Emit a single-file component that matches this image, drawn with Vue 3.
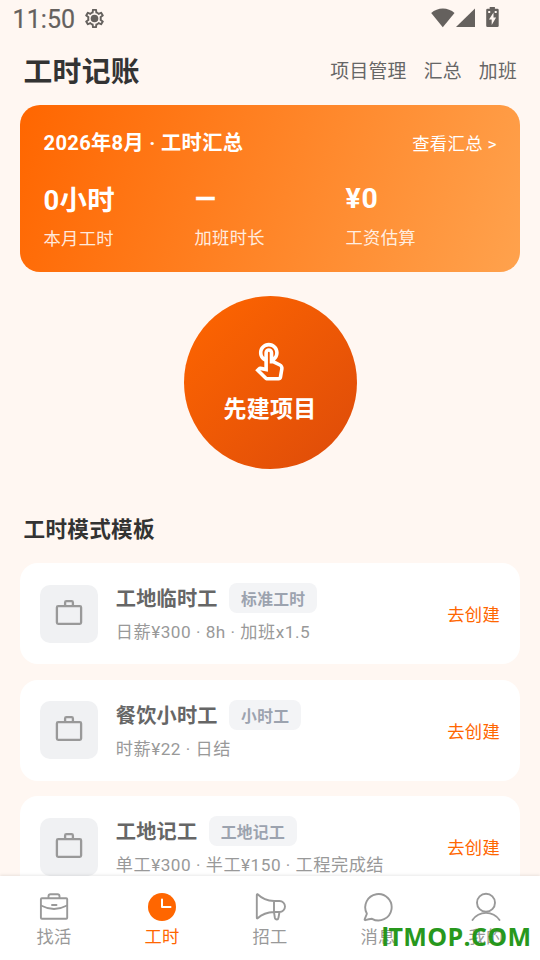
<script setup>
const stats = [
  { value: '0小时', label: '本月工时', mixed: true },
  { value: '—', label: '加班时长', dash: true },
  { value: '¥0', label: '工资估算' }
]
const templates = [
  { name: '工地临时工', tag: '标准工时', desc: '日薪¥300 · 8h · 加班x1.5' },
  { name: '餐饮小时工', tag: '小时工', desc: '时薪¥22 · 日结' },
  { name: '工地记工', tag: '工地记工', desc: '单工¥300 · 半工¥150 · 工程完成结' }
]
const tabs = [
  { id: 'jobs', label: '找活' },
  { id: 'hours', label: '工时', active: true },
  { id: 'hire', label: '招工' },
  { id: 'chat', label: '消息' },
  { id: 'me', label: '我的' }
]
</script>

<template>
  <div class="screen">
    <div class="status">
      <span class="clock">11:50</span>
      <svg class="gear" viewBox="0 0 24 24"><path d="M19.43 12.98c.04-.32.07-.64.07-.98s-.03-.66-.07-.98l2.11-1.65c.19-.15.24-.42.12-.64l-2-3.46a.5.5 0 0 0-.61-.22l-2.49 1c-.52-.4-1.08-.73-1.69-.98l-.38-2.65A.49.49 0 0 0 14 2h-4c-.25 0-.46.18-.49.42l-.38 2.65c-.61.25-1.17.59-1.69.98l-2.49-1a.5.5 0 0 0-.61.22l-2 3.46c-.13.22-.07.49.12.64l2.11 1.65c-.04.32-.07.65-.07.98s.03.66.07.98l-2.11 1.65c-.19.15-.24.42-.12.64l2 3.46c.12.22.39.3.61.22l2.49-1c.52.4 1.08.73 1.69.98l.38 2.65c.03.24.24.42.49.42h4c.25 0 .46-.18.49-.42l.38-2.65c.61-.25 1.17-.59 1.69-.98l2.49 1c.23.09.49 0 .61-.22l2-3.46c.12-.22.07-.49-.12-.64l-2.11-1.65zm-1.98-1.71c.04.31.05.52.05.73s-.02.43-.05.73l-.14 1.13.89.7 1.08.84-.7 1.21-1.27-.51-1.04-.42-.9.68c-.43.32-.84.56-1.25.73l-1.06.43-.16 1.13-.2 1.35h-1.4l-.35-2.48-1.06-.43c-.43-.18-.83-.41-1.23-.71l-.91-.7-1.06.43-1.27.51-.7-1.21 1.08-.84.89-.7-.14-1.13A7 7 0 0 1 6.5 12c0-.2.02-.43.05-.73l.14-1.13-.89-.7-1.08-.84.7-1.21 1.27.51 1.04.42.9-.68c.43-.32.84-.56 1.25-.73l1.06-.43.16-1.13.2-1.35h1.39l.35 2.48 1.06.43c.43.18.83.41 1.23.71l.91.7 1.06-.43 1.27-.51.7 1.21-1.07.85-.89.7.14 1.13z"/><circle cx="12" cy="12" r="4"/></svg>
      <span class="grow"></span>
      <svg class="sys" width="68" height="22" viewBox="0 0 68 22">
        <path d="M0.2 6C6.5 -.1 17.300 -.1 23.500 6L11.800 20.200Z"/>
        <path d="M44 1.500V20H25Z"/>
        <path fill-rule="evenodd" d="M58.700 0h5.200v1.700h2.500a1.300 1.300 0 0 1 1.300 1.300v15.700a1.300 1.300 0 0 1-1.300 1.300H56.500a1.300 1.300 0 0 1-1.300-1.300V3a1.300 1.300 0 0 1 1.300-1.300h2.200zM57.200 4h2v2h-2zM63.700 4h2v2h-2zM62.500 5.500l-4.500 7h2.700v5.500l4.400-7.500h-2.600z"/>
      </svg>
    </div>

    <header class="header">
      <h1>工时记账</h1>
      <nav><span>项目管理</span><span>汇总</span><span>加班</span></nav>
    </header>

    <main class="content">
      <section class="summary">
        <div class="summary-top">
          <b>2026年8月 · 工时汇总</b>
          <span>查看汇总 &gt;</span>
        </div>
        <div class="stats">
          <div v-for="s in stats" :key="s.label" class="stat" :class="{ mixed: s.mixed }">
            <b :class="{ dash: s.dash }">{{ s.value }}</b>
            <span>{{ s.label }}</span>
          </div>
        </div>
      </section>

      <button class="create">
        <svg viewBox="0 0 24 24"><path d="M18.190 12.440l-3.240-1.620c1.290-1 2.120-2.560 2.120-4.320C17.070 3.460 14.600 1 11.570 1S6.070 3.460 6.070 6.500c0 2.130 1.220 3.980 3 4.890v3.260c-2.150-.46-2.020-.44-2.260-.44-.53 0-1.030.21-1.410.59L4 16.220l5.090 5.090c.43.44 1.030.69 1.650.69h6.300c.98 0 1.810-.7 1.970-1.670l.8-4.710c.22-1.300-.43-2.580-1.620-3.180zm-.35 2.850l-.8 4.710h-6.300c-.09 0-.17-.04-.24-.1l-3.680-3.680 4.250.89V6.500c0-.28.22-.5.5-.5s.5.22.5.5v6h1.760l3.460 1.730c.4.2.62.63.55 1.060zM8.070 6.500c0-1.930 1.570-3.500 3.500-3.500s3.500 1.570 3.500 3.500c0 .95-.38 1.810-1 2.440V6.500c0-1.380-1.120-2.500-2.500-2.500s-2.500 1.120-2.500 2.500v2.440c-.62-.63-1-1.490-1-2.440z"/></svg>
        <span>先建项目</span>
      </button>

      <h2>工时模式模板</h2>
      <div class="list">
        <article v-for="t in templates" :key="t.name" class="card">
          <div class="thumb">
            <svg width="28" height="28" viewBox="0 0 28 28"><rect x="1.900" y="6.100" width="24.200" height="17.700" rx="1.300"/><path d="M10.100 6V2.500a1.300 1.300 0 0 1 1.300-1.300h5.200a1.300 1.300 0 0 1 1.300 1.300V6"/></svg>
          </div>
          <div class="info">
            <div class="name"><b>{{ t.name }}</b><span class="tag">{{ t.tag }}</span></div>
            <p>{{ t.desc }}</p>
          </div>
          <span class="go">去创建</span>
        </article>
      </div>
    </main>

    <footer class="tabbar">
      <div v-for="t in tabs" :key="t.id" class="tab" :class="{ active: t.active }">
        <svg viewBox="0 0 32 32">
          <g v-if="t.id === 'jobs'"><rect x="2.900" y="7.200" width="26.300" height="20.600" rx="1"/><path d="M10.500 7V5.300q0-2 2-2h7q2 0 2 2V7M3 14.500q13 7 26 0M14 14h4.500"/></g>
          <g v-else-if="t.id === 'hours'"><circle class="solid" cx="16" cy="16" r="14"/><path class="hands" d="M16 8.500V16h8.500"/></g>
          <g v-else-if="t.id === 'hire'"><path d="M3.600 3.300Q10 9.600 20 10h5.500a5.500 5.500 0 0 1 0 11H20Q10 21.400 3.600 27.300q-.8.500-.8-.8v-22q0-1.700.8-1.200M20 10v11l.8 5.500q.4 2 2.200 2 1.200 0 1.500-2l1-5.500"/></g>
          <g v-else-if="t.id === 'chat'"><path d="M4.800 22.500A13.200 13.200 0 1 1 10 27.800Q7 28.300 3.200 29.200q-.8 0-.5-1L4.800 23z"/></g>
          <g v-else><circle cx="16" cy="11.700" r="9"/><path d="M2.500 29a16.300 16.300 0 0 1 27 0"/></g>
        </svg>
        <span>{{ t.label }}</span>
      </div>
      <div class="watermark"><span class="plain">I</span>TMOP.COM</div>
    </footer>
  </div>
</template>

<style>
body { margin: 0; }
</style>
<style scoped>
* { box-sizing: border-box; }
.screen { width: 540px; height: 960px; overflow: hidden; display: flex; flex-direction: column; background: #fff7f2; color: #333; font-family: Roboto, "Noto Sans CJK SC", sans-serif; letter-spacing: .3px; }
.status { height: 40px; flex: none; display: flex; align-items: flex-start; padding: 7px 41px 0 12.500px; color: #65615e; }
.clock { font-size: 25px; line-height: 25px; letter-spacing: .1px; -webkit-text-stroke: .2px currentColor; }
.gear { width: 23px; height: 23px; margin: 0 0 0 8px; fill: #65615e; }
.grow { flex: 1; }
.sys { fill: #65615e; }
.header { height: 65px; flex: none; display: flex; align-items: center; justify-content: space-between; padding: 0 23px 2px 23.500px; }
h1 { margin: 0; font-size: 28.8px; line-height: 40px; font-weight: 700; }
nav { display: flex; gap: 17px; font-size: 18.800px; line-height: 28px; color: #666; }
.content { flex: 1; min-height: 0; overflow: hidden; padding: 0 20px; display: flex; flex-direction: column; }
.summary { flex: none; height: 167.400px; border-radius: 20px; padding: 22px 23px 0 23.500px; background: linear-gradient(108.500deg, #ff6600, #ffa24d); color: #fff; }
.summary-top { height: 30px; display: flex; align-items: center; justify-content: space-between; }
.summary-top b { font-size: 20.2px; font-weight: 700; letter-spacing: .32px; margin-top: -1px; }
.summary-top span { font-size: 17.3px; letter-spacing: .4px; }
.stats { display: grid; grid-template-columns: repeat(3, 151px); margin-top: 21px; }
.stat { display: flex; flex-direction: column; }
.stat b { height: 40px; line-height: 42px; font-size: 28.400px; letter-spacing: .8px; }
.stat.mixed b { font-size: 27.400px; line-height: 44px; letter-spacing: .3px; }
.stat b.dash { font-size: 28px; width: 21px; transform: scaleX(.96); transform-origin: left; -webkit-text-stroke: .5px #fff; }
.stat span { height: 40px; line-height: 40px; font-size: 17.3px; opacity: .85; }
.mixed { padding-top: 1px; }
.create { flex: none; align-self: center; width: 173px; height: 173px; margin: 24px 0 0; padding: 44.500px 0 0; border: 0; border-radius: 50%; background: linear-gradient(135deg, #ff6600, #dd4b0a); color: #fff; display: flex; flex-direction: column; align-items: center; font-family: inherit; letter-spacing: .2px; }
.create svg { width: 43.200px; height: 43.200px; flex: none; fill: currentColor; }
.create span { font-size: 23px; line-height: 34px; margin-top: 9px; font-weight: 700; }
h2 { flex: none; margin: 45px 3px 0 3.500px; height: 32px; line-height: 32px; font-size: 21.6px; }
.list { flex: none; display: flex; flex-direction: column; gap: 15.500px; margin-top: 16.800px; }
.card { height: 101px; flex: none; border-radius: 18px; background: #fff; display: flex; align-items: center; padding: 0 20px; }
.thumb { width: 58px; height: 58px; flex: none; border-radius: 10px; background: #f0f1f3; display: flex; align-items: center; justify-content: center; }
.thumb svg { fill: none; stroke: #999; stroke-width: 2.300; }
.info { flex: 1; padding: .8px 0 0 17.800px; }
.name { display: flex; align-items: center; gap: 11.300px; height: 30px; }
.name b { font-size: 20.2px; color: #666; letter-spacing: .2px; margin-top: -.8px; }
.tag { height: 30px; line-height: 33px; padding: 0 12px; border-radius: 8px; background: #f3f4f6; color: #9ca3af; font-size: 15.8px; font-weight: 700; }
.info p { margin: 6px 0 0; font-size: 17.2px; line-height: 26px; color: #999; letter-spacing: .5px; }
.go { color: #f60; font-size: 17.3px; }
.tabbar { position: relative; flex: none; height: 84px; display: flex; background: #fff; box-shadow: 0 -1px 3px rgba(0,0,0,.09); }
.tab { flex: 1; display: flex; flex-direction: column; align-items: center; padding-top: 15px; color: #999; font-size: 17.3px; }
.tab svg { width: 32px; height: 32px; fill: none; stroke: currentColor; stroke-width: 1.900; stroke-linecap: round; stroke-linejoin: round; }
.tab span { line-height: 28px; }
.tab.active { color: #f60; }
.solid { fill: #f60; stroke: none; }
.hands { stroke: #fff; stroke-width: 2; }
.watermark { position: absolute; right: 8.500px; top: 43px; font: 700 25px/34px "Open Sans", sans-serif; color: #209414; opacity: .96; letter-spacing: .35px; }
.plain { font-family: Roboto, sans-serif; font-size: 25.500px; letter-spacing: -.5px; }
</style>
